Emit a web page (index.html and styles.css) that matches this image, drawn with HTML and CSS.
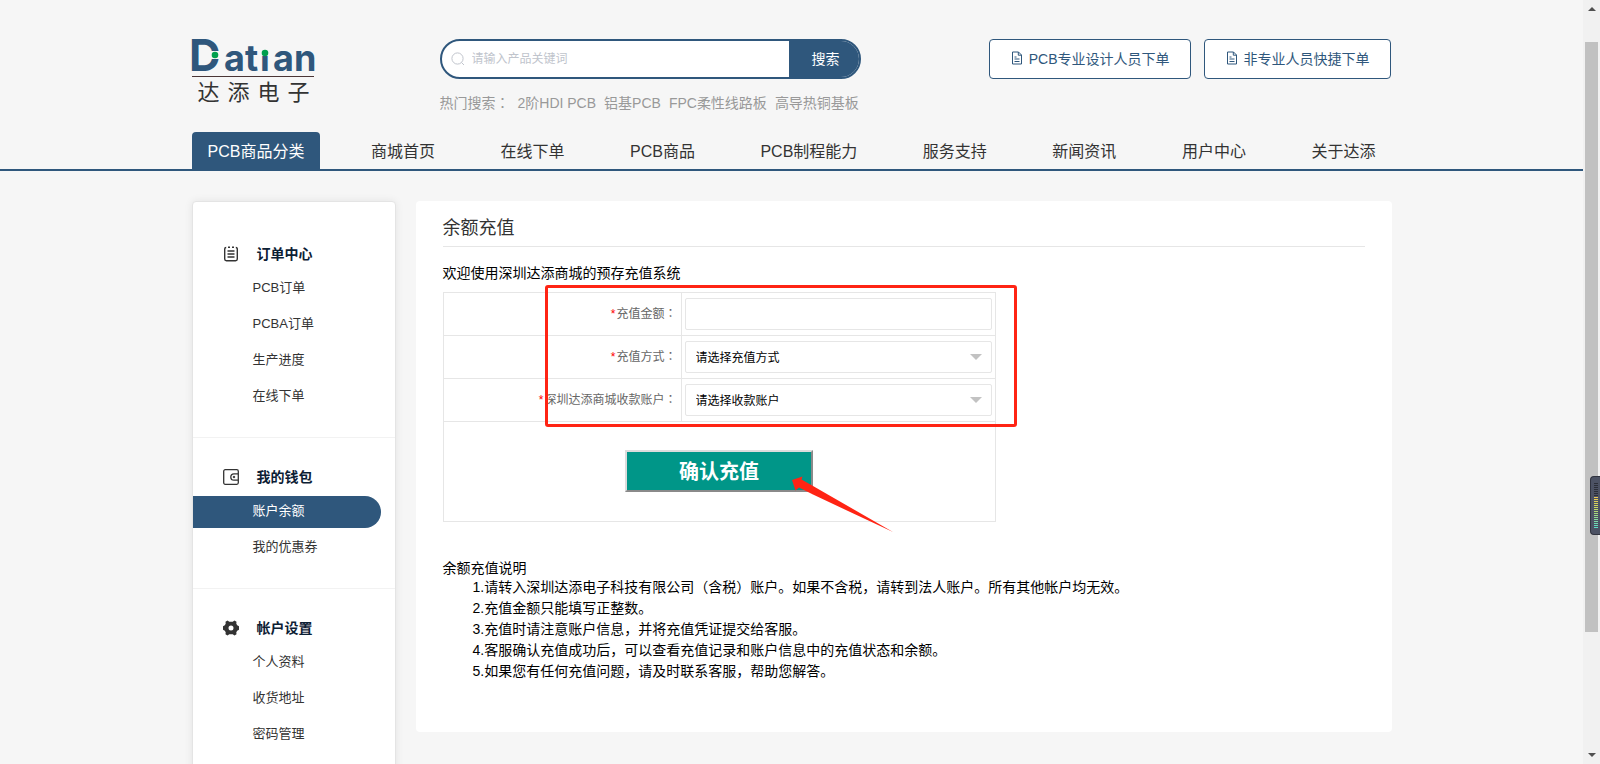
FILE: index.html
```html
<!DOCTYPE html>
<html lang="zh-CN">
<head>
<meta charset="utf-8">
<title>余额充值 - 达添电子</title>
<link rel="stylesheet" href="styles.css">
</head>
<body>
<svg class="sprite" aria-hidden="true">
  <symbol id="doc" viewBox="0 0 14 14" fill="none" stroke="currentColor">
    <path d="M2.500 1h6l3 3v9h-9zM8.300 1v3.200h3.200M4.500 6h2M4.500 8h5M4.500 10.500h5"/>
  </symbol>
</svg>
<div class="window">
  <div class="page">
    <header class="header">
      <div class="container top">
        <a class="logo" href="#" aria-label="达添电子">
          <svg class="wordmark" width="124" height="40" viewBox="0 0 124 40">
            <text class="logo-d" x="-3" y="32">D</text>
            <rect x="18" y="12" width="11" height="8" fill="#f6f6f6"/>
            <circle cx="23" cy="16" r="3.300" fill="#009f4d"/>
            <text class="logo-rest" y="32"><tspan x="32">at</tspan><tspan x="68">i</tspan><tspan x="81">an</tspan></text>
            <rect x="67" y="0" width="12" height="17" fill="#f6f6f6"/>
            <circle cx="73" cy="14" r="3.300" fill="#009f4d"/>
            <rect x="0" y="37" width="122" height="1" fill="#4a3535"/>
          </svg>
          <span class="logo-cn"><span>达</span><span>添</span><span>电</span><span>子</span></span>
        </a>
        <div class="search">
          <form class="search-bar">
            <svg width="14" height="14" viewBox="0 0 14 14" fill="none" stroke="#c0c4cc" aria-hidden="true"><circle cx="6.500" cy="6.500" r="5.600"/><path d="M10.500 10.500L13 13"/></svg>
            <input class="search-input" type="text" placeholder="请输入产品关键词" aria-label="请输入产品关键词">
            <button class="search-btn" type="button">搜索</button>
          </form>
          <div class="hot">
            <span>热门搜索<span class="colon" lang="zh-TW">：</span></span>
            <a href="#">2阶HDI PCB</a><a href="#">铝基PCB</a><a href="#">FPC柔性线路板</a><a href="#">高导热铜基板</a>
          </div>
        </div>
        <div class="actions">
          <button class="order-btn" type="button"><svg width="14" height="14"><use href="#doc"/></svg>PCB专业设计人员下单</button>
          <button class="order-btn" type="button"><svg width="14" height="14"><use href="#doc"/></svg>非专业人员快捷下单</button>
        </div>
      </div>
      <nav class="container nav">
        <a class="active" href="#">PCB商品分类</a>
        <a href="#">商城首页</a>
        <a href="#">在线下单</a>
        <a href="#">PCB商品</a>
        <a href="#">PCB制程能力</a>
        <a href="#">服务支持</a>
        <a href="#">新闻资讯</a>
        <a href="#">用户中心</a>
        <a href="#">关于达添</a>
      </nav>
    </header>
    <div class="container body">
      <aside class="sidebar">
        <section class="group">
          <h2><svg width="16" height="16" viewBox="0 0 16 16" fill="none" stroke="#333" stroke-width="1.400"><path d="M3.200 1.500C2 1.500 1.700 2 1.700 3v10c0 1.200.5 1.700 1.700 1.700h9.200c1.200 0 1.700-.5 1.700-1.700V3c0-1-.3-1.500-1.500-1.500M5 1.200h2M9 1.200h2M4.500 5h7M4.500 8h7M4.500 11h7"/></svg>订单中心</h2>
          <a href="#">PCB订单</a>
          <a href="#">PCBA订单</a>
          <a href="#">生产进度</a>
          <a href="#">在线下单</a>
        </section>
        <section class="group">
          <h2><svg width="16" height="16" viewBox="0 0 16 16" fill="none" stroke="#333" stroke-width="1.300"><rect x=".7" y=".7" width="14.600" height="14.600" rx="1.500"/><path d="M15 4.800h-4a3.200 3.200 0 0 0 0 6.400h4"/><circle cx="11" cy="8" r=".8" fill="#333" stroke-width="1"/></svg>我的钱包</h2>
          <a class="current" href="#">账户余额</a>
          <a href="#">我的优惠券</a>
        </section>
        <section class="group">
          <h2><svg width="16" height="16" viewBox="0 0 16 16" fill="#333"><path fill-rule="evenodd" d="M4.500.5 6.300 1.800h3.400L11.500.5l2 1.200-.2 2.100.9 1.500L16 6.300v3.400l-1.800 1-.9 1.500.2 2.100-2 1.200-1.800-1.300H6.300l-1.800 1.300-2-1.200.2-2.100-.9-1.500L0 9.700V6.300l1.800-1 .9-1.500-.2-2.100zM8 5.500a2.500 2.500 0 1 0 0 5 2.500 2.500 0 0 0 0-5z"/></svg>帐户设置</h2>
          <a href="#">个人资料</a>
          <a href="#">收货地址</a>
          <a href="#">密码管理</a>
        </section>
      </aside>
      <main class="content">
        <h1>余额充值</h1>
        <p class="welcome">欢迎使用深圳达添商城的预存充值系统</p>
        <form class="recharge">
          <table>
            <tr><th scope="row"><label for="amount"><i>*</i>充值金额<span class="colon" lang="zh-TW">：</span></label></th>
              <td><input id="amount" class="field" type="text"></td></tr>
            <tr><th scope="row"><label for="method"><i>*</i>充值方式<span class="colon" lang="zh-TW">：</span></label></th>
              <td><div class="pick"><select id="method" class="field"><option>请选择充值方式</option></select></div></td></tr>
            <tr><th scope="row"><label for="account"><i>*</i>深圳达添商城收款账户<span class="colon" lang="zh-TW">：</span></label></th>
              <td><div class="pick"><select id="account" class="field"><option>请选择收款账户</option></select></div></td></tr>
            <tr><td class="submit-cell" colspan="2"><button class="submit" type="button">确认充值</button></td></tr>
          </table>
          <div class="mark-box"></div>
          <svg class="mark-arrow" width="104" height="58" viewBox="0 0 104 58" fill="#ff2414" aria-hidden="true"><path d="M1 4 11.500.500 10.500 3.500 22 10 102 56 57 35 22 18.500 8 11.500 4.500 14.500z"/></svg>
        </form>
        <section class="notes">
          <h3>余额充值说明</h3>
          <p>1.请转入深圳达添电子科技有限公司（含税）账户。如果不含税，请转到法人账户。所有其他帐户均无效。</p>
          <p>2.充值金额只能填写正整数。</p>
          <p>3.充值时请注意账户信息，并将充值凭证提交给客服。</p>
          <p>4.客服确认充值成功后，可以查看充值记录和账户信息中的充值状态和余额。</p>
          <p>5.如果您有任何充值问题，请及时联系客服，帮助您解答。</p>
        </section>
      </main>
    </div>
  </div>
  <div class="scrollbar" aria-hidden="true">
    <span class="tri up"></span>
    <div class="track"><div class="thumb"></div></div>
    <span class="tri down"></span>
    <div class="meter"><span></span></div>
  </div>
</div>
</body>
</html>
```

FILE: styles.css
```css
* { box-sizing: border-box; }
body, h1, h2, h3, p { margin: 0; }
body {
  background: #f6f6f6;
  color: #000;
  font: 14px/20px "Liberation Sans", "Noto Sans CJK SC", sans-serif;
}
button, input, select { font-family: inherit; }
a { color: inherit; text-decoration: none; }
.sprite { display: none; }
.colon { font-family: "Noto Sans CJK TC", sans-serif; line-height: 1; }

.window { display: flex; height: 100vh; overflow: hidden; }
.page { flex: 1; min-width: 0; overflow: hidden; }
.container { max-width: 1200px; margin: 0 auto; }

/* Header */
.header { border-bottom: 2px solid #2f577c; }
.top { display: flex; align-items: flex-start; padding-top: 39px; height: 132px; }
.logo { display: flex; flex-direction: column; width: 248px; }
.wordmark { display: block; overflow: visible; }
.logo-d { font: 700 44px Inter, sans-serif; fill: #2f577c; }
.logo-rest { font: 700 36px Inter, sans-serif; fill: #2f577c; }
.logo-cn {
  display: flex;
  justify-content: space-between;
  width: 112px;
  margin-left: 6px;
  font-size: 22px;
  line-height: 28px;
  color: #333;
}
.search-bar {
  display: flex;
  align-items: center;
  width: 421px;
  height: 40px;
  padding-left: 9px;
  border: 2px solid #2f577c;
  border-radius: 20px;
  background: #fff;
  overflow: hidden;
}
.search-input {
  flex: 1;
  min-width: 0;
  border: 0;
  padding: 0 7px;
  font-size: 12px;
  outline: 0;
  background: none;
}
.search-input::placeholder { color: #c0c4cc; }
.search-btn {
  width: 70px;
  height: 40px;
  padding: 0 4px 2px 8px;
  border: 0;
  background: #2f577c;
  color: #fff;
  font-size: 14px;
}
.hot { display: flex; gap: 8px; margin-top: 14px; color: #999; white-space: nowrap; }
.actions { display: flex; gap: 13px; margin-left: auto; padding-right: 1px; }
.order-btn {
  display: flex;
  align-items: center;
  gap: 5px;
  height: 40px;
  padding: 0 20px 2px;
  border: 1px solid #2f577c;
  border-radius: 4px;
  background: #fff;
  color: #2f577c;
  font-size: 14px;
  white-space: nowrap;
}
.nav { display: flex; justify-content: space-between; padding-right: 1px; color: #333; }
.nav a { padding: 2px 15px 0; font-size: 16px; line-height: 35px; white-space: nowrap; }
.nav .active {
  padding-left: 16px;
  padding-right: 16px;
  background: #2f577c;
  color: #fff;
  border-radius: 4px 4px 0 0;
}

/* Body */
.body { display: flex; align-items: flex-start; gap: 20px; padding-top: 30px; }
.sidebar {
  width: 204px;
  min-height: 640px;
  padding-top: 13px;
  border: 1px solid #e4e4e4;
  border-radius: 4px;
  background: #fff;
  box-shadow: 0 0 8px rgba(0, 0, 0, .08);
}
.group {
  display: flex;
  flex-direction: column;
  gap: 4px;
  padding: 26px 0 24px;
  border-bottom: 1px solid #f2f2f2;
}
.group h2 {
  display: flex;
  align-items: center;
  gap: 18px;
  height: 26px;
  margin-bottom: 2px;
  padding-left: 30px;
  font-size: 14px;
  font-weight: 700;
  color: #0c2034;
}
.group a {
  margin-right: 14px;
  padding: 0 0 2px 60px;
  border-radius: 0 16px 16px 0;
  font-size: 13px;
  line-height: 30px;
  color: #333;
}
.group .current { background: #2f577c; color: #fff; }

.content {
  flex: 1;
  min-width: 0;
  padding: 10px 27px 50px;
  border-radius: 4px;
  background: #fff;
}
.content h1 {
  border-bottom: 1px solid #e6e6e6;
  font-size: 18px;
  font-weight: 400;
  line-height: 35px;
  color: #333;
}
.welcome { padding: 16px 0 9px; }
.recharge { position: relative; width: 553px; }
.recharge table { width: 100%; border-collapse: collapse; table-layout: fixed; }
.recharge th, .recharge td { border: 1px solid #e6e6e6; }
.recharge th {
  width: 238px;
  padding: 0 4px 0 0;
  text-align: right;
  font-size: 12px;
  font-weight: 400;
  color: #666;
  white-space: nowrap;
}
.recharge th i { margin-right: 1px; color: #f00; font-style: normal; }
.recharge td { height: 43px; padding: 0 3px; }
.field {
  display: block;
  width: 100%;
  height: 32px;
  padding: 1px 10px 0;
  border: 1px solid #e6e6e6;
  border-radius: 2px;
  background: #fff;
  color: #000;
  font-size: 12px;
  appearance: none;
}
.pick { position: relative; }
.pick::after {
  content: "";
  position: absolute;
  top: 13px;
  right: 10px;
  border: 6px solid transparent;
  border-top-color: #c2c2c2;
  border-bottom: 0;
  pointer-events: none;
}
.recharge .submit-cell { height: 100px; padding-bottom: 2px; text-align: center; }
.submit {
  width: 188px;
  height: 42px;
  border: 2px solid;
  border-color: #dcdcdc #8a8a8a #8a8a8a #dcdcdc;
  background: #009688;
  color: #fff;
  font-size: 20px;
  font-weight: 700;
}
.mark-box {
  position: absolute;
  left: 102px;
  top: -7px;
  width: 472px;
  height: 142px;
  border: 3px solid #ff2414;
  border-radius: 3px;
  pointer-events: none;
}
.mark-arrow { position: absolute; left: 348px; top: 184px; pointer-events: none; }
.notes { padding-top: 37px; }
.notes h3 { font-size: 14px; font-weight: 400; line-height: 18px; }
.notes p { padding-left: 30px; line-height: 21px; }

/* Scroll bar */
.scrollbar {
  position: relative;
  display: flex;
  flex-direction: column;
  align-items: center;
  justify-content: space-between;
  width: 17px;
  padding: 7px 0;
  background: #f1f1f1;
}
.track { flex: 1; width: 13px; padding: 31px 0 121px; }
.thumb { height: 100%; background: #c1c1c1; }
.tri { border: 4px solid transparent; }
.up { border-top: 0; border-bottom-color: #505050; }
.down { border-bottom: 0; border-top-color: #505050; }
.meter {
  position: absolute;
  right: 0;
  top: 476px;
  width: 10px;
  height: 59px;
  padding: 6px 2px 6px 3px;
  border: 1px solid #30333f;
  border-right: 0;
  border-radius: 4px 0 0 4px;
  background: #4c5264;
}
.meter span {
  display: block;
  height: 100%;
  background:
    repeating-linear-gradient(transparent 0 1px, #4c5264 1px 2px),
    linear-gradient(#2b2e38 0 30%, #f0c850 30%, #c8d860 55%, #58dcc8);
}
```
